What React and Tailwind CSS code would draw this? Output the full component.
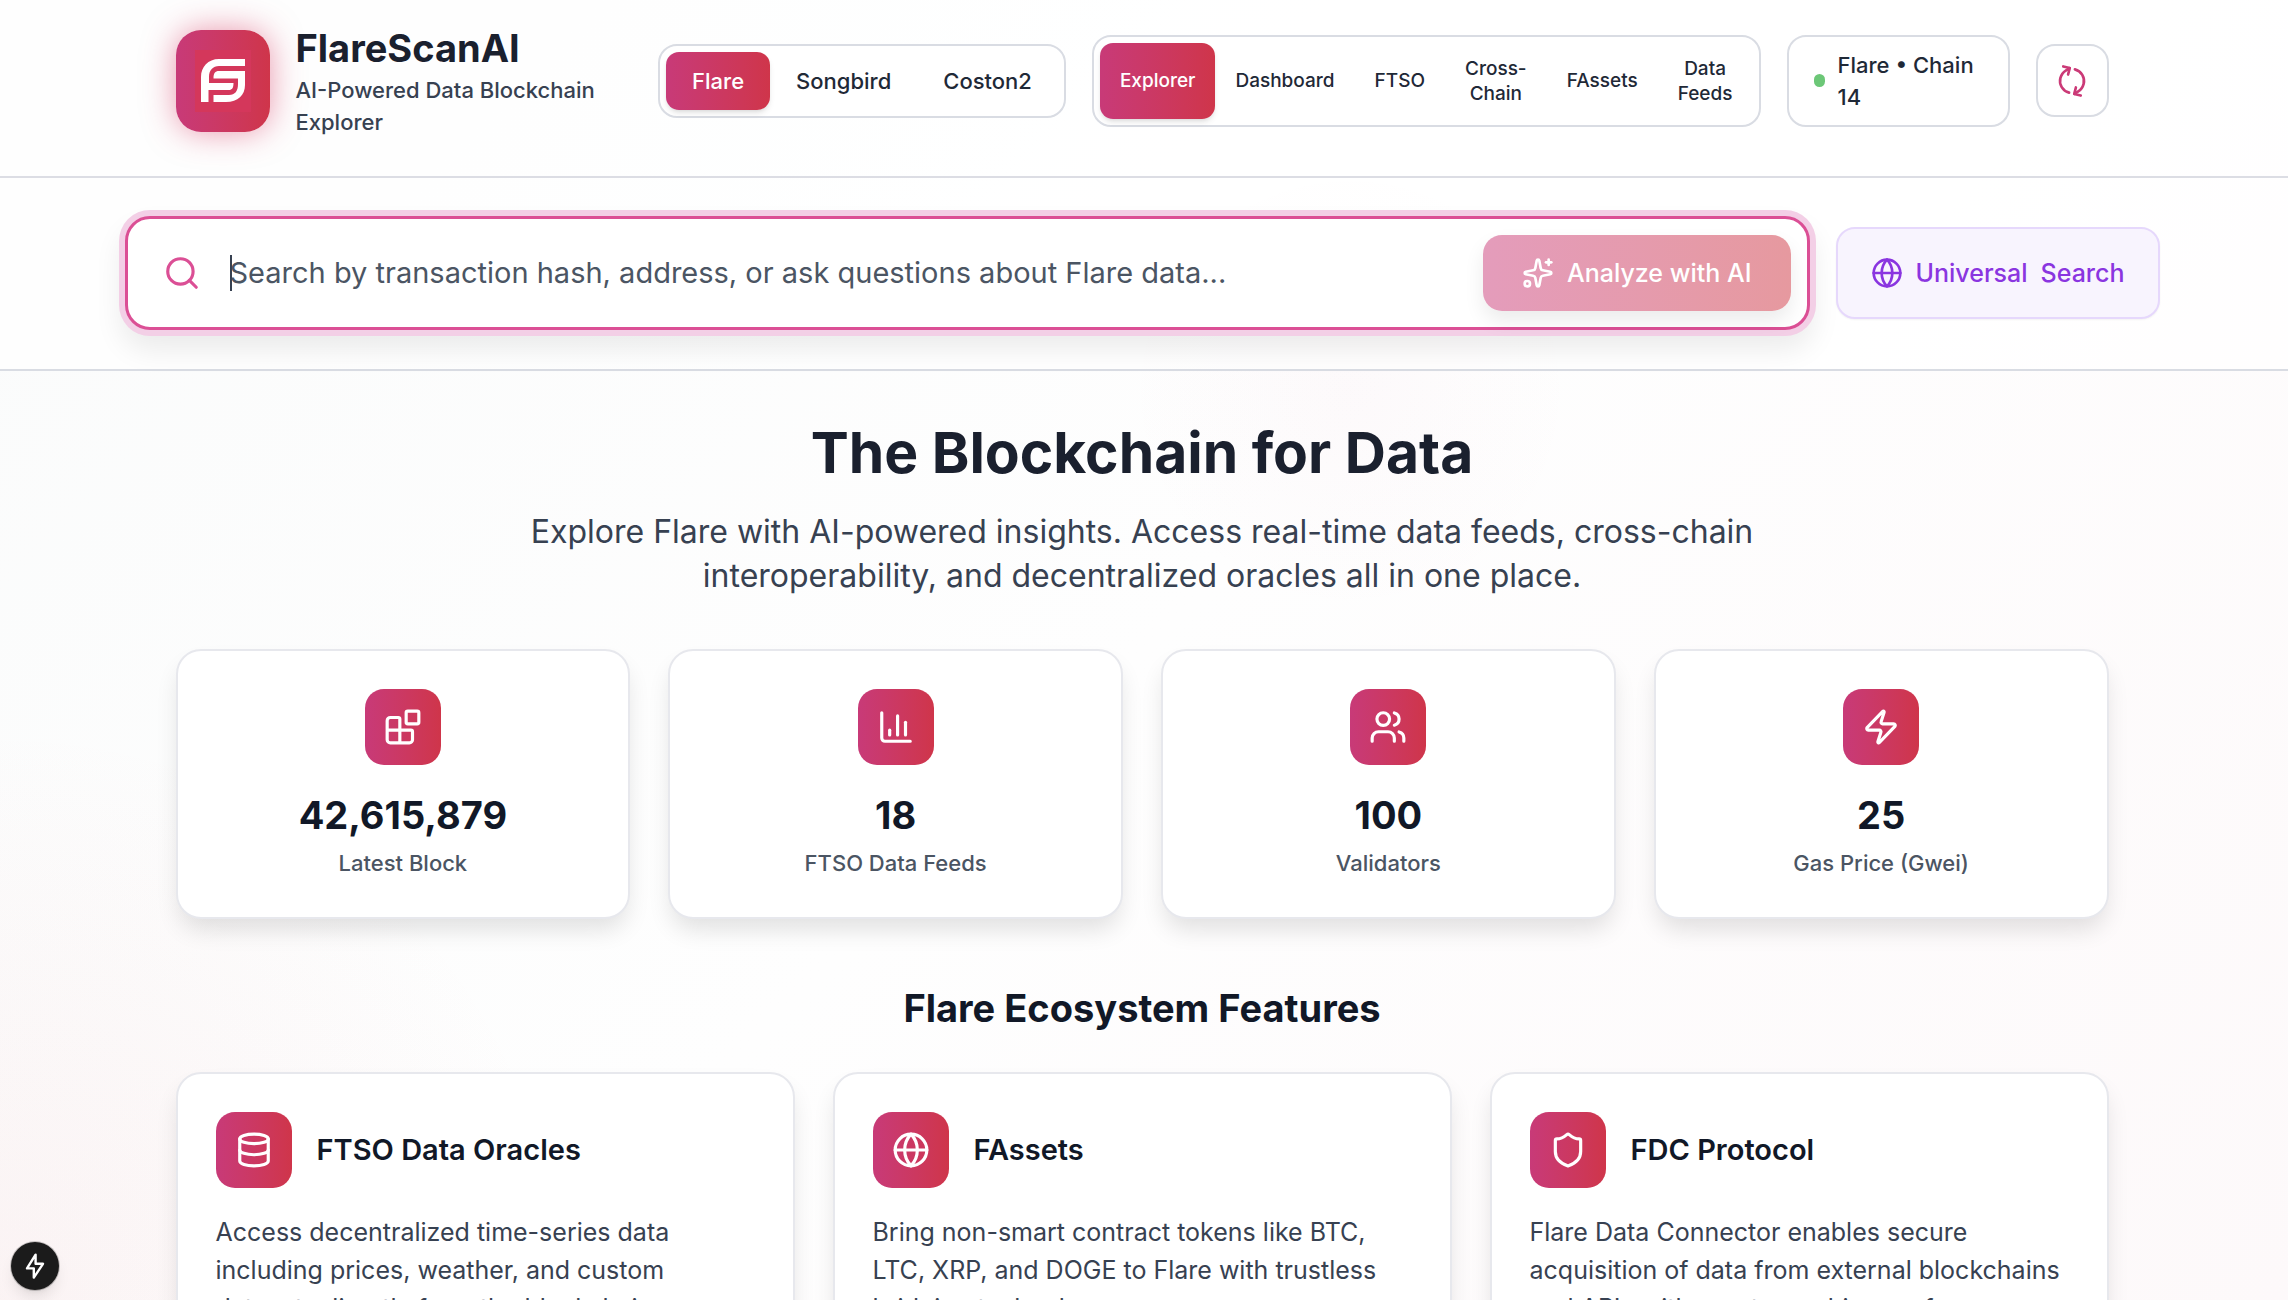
import React from "react";
import {
  Blocks,
  Users,
  Zap,
  Database,
  Globe,
  Shield,
  Search,
  Sparkles,
  RefreshCw,
} from "lucide-react";

const networks = ["Flare", "Songbird", "Coston2"];
const pages = ["Explorer", "Dashboard", "FTSO", "Cross-Chain", "FAssets", "Data Feeds"];

function BarChart({ className }) {
  return (
    <svg
      className={className}
      viewBox="0 0 24 24"
      fill="none"
      stroke="currentColor"
      strokeWidth="2"
      strokeLinecap="round"
      strokeLinejoin="round"
      aria-hidden="true"
    >
      <path d="M3 3v16a2 2 0 0 0 2 2h16" />
      <path d="M18 17V9" />
      <path d="M13 17V5" />
      <path d="M8 17v-3" />
    </svg>
  );
}

const stats = [
  { icon: Blocks, value: "42,615,879", label: "Latest Block" },
  { icon: BarChart, value: "18", label: "FTSO Data Feeds" },
  { icon: Users, value: "100", label: "Validators" },
  { icon: Zap, value: "25", label: "Gas Price (Gwei)" },
];

const features = [
  {
    icon: Database,
    title: "FTSO Data Oracles",
    text: "Access decentralized time-series data including prices, weather, and custom datasets directly from the blockchain.",
  },
  {
    icon: Globe,
    title: "FAssets",
    text: "Bring non-smart contract tokens like BTC, LTC, XRP, and DOGE to Flare with trustless bridging technology.",
  },
  {
    icon: Shield,
    title: "FDC Protocol",
    text: "Flare Data Connector enables secure acquisition of data from external blockchains and APIs with cryptographic proofs.",
  },
];

function Logo() {
  return (
    <div className="flex h-[102px] w-[94px] shrink-0 items-center justify-center rounded-[25px] bg-linear-to-r from-[#c83a78] to-[#cf354a] shadow-[0_0_32px_rgba(214,48,92,0.5)]">
      <div className="flex h-[62px] w-[56px] items-center justify-center bg-[#d4375b]">
        <svg viewBox="0 0 44 43" className="h-[43px] w-[44px] fill-white" aria-hidden="true">
          <path d="M44 0H18C7 0 0 8 0 18V43H7.500V31H28C31 31 32.500 29 32.500 24H8V18C8 11 12 7 18 7H44Z" />
          <path d="M44 12H18C14 12 12.500 14 12.500 19.500H37V25C37 32 34 36 28 36H12.500V43H25C37 43 44 36 44 26Z" />
        </svg>
      </div>
    </div>
  );
}

function IconTile({ icon: Icon }) {
  return (
    <div className="flex size-[76px] shrink-0 items-center justify-center rounded-[19px] bg-linear-to-r from-[#c83a78] to-[#cf354a] text-white">
      <Icon className="size-[38px]" />
    </div>
  );
}

function Header() {
  return (
    <header className="border-b-2 border-[#dcdde4] bg-white/80 pt-[23px] pb-[38px]">
      <div className="mx-auto flex max-w-[2035px] items-center gap-[26px] px-[51px]">
        <div className="flex min-w-0 flex-1 items-center gap-[26px]">
          <Logo />
          <div className="max-w-[340px]">
            <h1 className="text-[38px] leading-[51px] font-bold text-[#1a202e]">FlareScanAI</h1>
            <p className="text-[22px] leading-8 font-medium text-[#374151]">
              AI-Powered Data Blockchain Explorer
            </p>
          </div>
        </div>

        <div className="flex rounded-[19px] border-2 border-[#d9dce3] bg-white p-[6px]">
          {networks.map((n, i) => (
            <button
              key={n}
              className={
                i === 0
                  ? "rounded-[13px] bg-linear-to-r from-[#c83a78] to-[#cf354a] px-[26px] py-[13px] text-[22px] leading-8 font-medium text-white shadow-md"
                  : "rounded-[13px] px-[26px] py-[13px] text-[22px] leading-8 font-medium text-[#1f2937]"
              }
            >
              {n}
            </button>
          ))}
        </div>

        <nav className="flex rounded-[19px] border-2 border-[#d9dce3] bg-white p-[6px]">
          {pages.map((p, i) => (
            <button
              key={p}
              className={
                i === 0
                  ? "w-min rounded-[13px] bg-linear-to-r from-[#c83a78] to-[#cf354a] px-5 py-[13px] text-[19px] leading-[25px] font-medium text-white shadow-md"
                  : "w-min rounded-[13px] px-5 py-[13px] text-[19px] leading-[25px] font-medium text-[#1f2937]"
              }
            >
              {p}
            </button>
          ))}
        </nav>

        <div className="flex w-[223px] shrink-0 items-center gap-[13px] rounded-[19px] border-2 border-[#d9dce3] bg-white px-[25px] py-3">
          <span className="h-[13px] w-[11px] shrink-0 rounded-full bg-[#6cc777]" />
          <span className="text-[22px] leading-8 font-medium text-[#1f2937]">Flare • Chain 14</span>
        </div>

        <button
          aria-label="Refresh"
          className="flex size-[73px] shrink-0 items-center justify-center rounded-[19px] border-2 border-[#d9dce3] bg-white text-[#cb3a77]"
        >
          <RefreshCw className="size-8 -rotate-[76deg]" />
        </button>
      </div>
    </header>
  );
}

function SearchBar() {
  return (
    <section className="border-b-2 border-[#d9dce3] bg-white/80 pt-[38px] pb-[39px]">
      <form className="mx-auto flex max-w-[2035px] items-center gap-[26px]">
        <div className="flex flex-1 items-center rounded-[25px] border-3 border-[#db4f95] bg-white py-4 pr-4 pl-[35px] shadow-[0_0_0_6px_#f3cfe6,0_16px_28px_4px_rgba(0,0,0,0.08)]">
          <label htmlFor="query" className="text-[#db4f95]">
            <Search className="size-[38px]" aria-label="Search" />
          </label>
          <div className="relative ml-[29px] flex-1">
            <input
              id="query"
              type="text"
              placeholder="Search by transaction hash, address, or ask questions about Flare data..."
              className="w-full bg-transparent text-[29px] leading-[44px] text-[#1f2937] outline-none placeholder:text-[#4b5563]"
            />
            <span className="absolute top-1 left-0 h-9 w-0.5 bg-[#374151]" />
          </div>
          <button
            type="button"
            className="flex h-[76px] items-center gap-[13px] rounded-[19px] bg-linear-to-r from-[#e49cbb] to-[#e6999f] px-[39px] text-[25px] leading-[38px] font-medium text-white shadow-[0_10px_20px_rgba(0,0,0,0.08)]"
          >
            <Sparkles className="size-8" />
            Analyze with AI
          </button>
        </div>
        <button
          type="button"
          className="flex h-[92px] items-center gap-[13px] rounded-[19px] border-2 border-[#e6d8fc] bg-[#f8f4fe] px-[33px] text-[25px] leading-[38px] font-medium text-[#8a35e0] shadow-xs"
        >
          <Globe className="size-8" />
          <span>Universal</span>
          <span>Search</span>
        </button>
      </form>
    </section>
  );
}

export default function App() {
  return (
    <div className="h-screen overflow-hidden bg-[radial-gradient(circle_at_0%_100%,rgba(215,80,90,0.06),transparent_22%),radial-gradient(circle_at_59%_30%,rgba(200,60,120,0.025),transparent_14%),linear-gradient(135deg,#fafbfb_0%,#fefefe_50%,#fdf9fa_100%)] pr-1 font-['Inter',sans-serif] antialiased">
      <div className="-mr-1">
        <div className="*:pr-1">
          <Header />
          <SearchBar />
        </div>
      </div>

      <main className="mx-auto max-w-[2035px] px-[51px] pt-[50px]">
        <div className="text-center">
          <h2 className="text-[57px] leading-[64px] font-bold text-[#1a202e]">The Blockchain for Data</h2>
          <p className="mx-auto mt-[25px] max-w-[1240px] text-[32px] leading-[44px] text-[#374151]">
            Explore Flare with AI-powered insights. Access real-time data feeds, cross-chain
            interoperability, and decentralized oracles all in one place.
          </p>
        </div>

        <div className="mt-[51px] grid grid-cols-4 gap-[38px]">
          {stats.map((s) => (
            <div
              key={s.label}
              className="flex flex-col items-center rounded-[25px] border-2 border-[#e7e8ed] bg-white p-[38px] shadow-[0_14px_24px_-4px_rgba(0,0,0,0.12)]"
            >
              <IconTile icon={s.icon} />
              <div className="mt-[25px] text-[38px] leading-[51px] font-bold text-[#111827]">{s.value}</div>
              <div className="mt-[6px] text-[22px] leading-8 font-medium text-[#4b5563]">{s.label}</div>
            </div>
          ))}
        </div>

        <h2 className="mt-16 text-center text-[38px] leading-[51px] font-bold text-[#111827]">
          Flare Ecosystem Features
        </h2>

        <div className="mt-[38px] grid grid-cols-3 gap-[38px]">
          {features.map((f) => (
            <article
              key={f.title}
              className="rounded-[25px] border-2 border-[#e7e8ed] bg-white p-[38px] shadow-[0_14px_24px_-4px_rgba(0,0,0,0.12)]"
            >
              <div className="flex items-center gap-[25px]">
                <IconTile icon={f.icon} />
                <h3 className="text-[29px] leading-[44px] font-semibold text-[#111827]">{f.title}</h3>
              </div>
              <p className="mt-[25px] text-[25px] leading-[38px] text-[#374151]">{f.text}</p>
            </article>
          ))}
        </div>
      </main>

      <button
        aria-label="Developer tools"
        className="fixed bottom-[10px] left-[11px] flex size-12 items-center justify-center rounded-full bg-[#1b1b1b] text-white shadow-lg ring-1 ring-black/20"
      >
        <svg viewBox="0 0 16 16" className="size-8" fill="none" stroke="currentColor" strokeWidth="1.200" aria-hidden="true">
          <path d="M8.300 2.300L4 9.200H7.400V13.800L12 6.900H8.300Z" strokeLinejoin="round" />
        </svg>
      </button>
    </div>
  );
}
